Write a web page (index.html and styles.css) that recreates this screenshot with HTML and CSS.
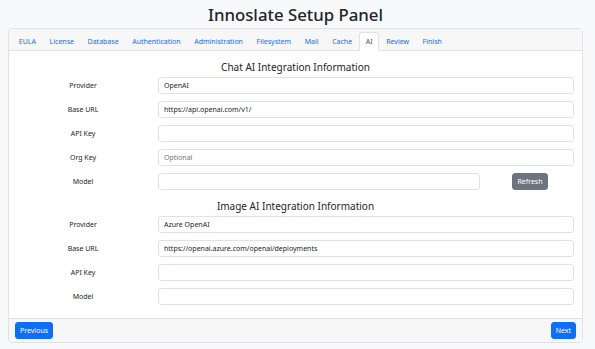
FILE: index.html
```html
<!DOCTYPE html>
<html lang="en">
<head>
    <meta charset="UTF-8">
    <meta name="viewport" content="width=device-width, initial-scale=1.0">
    <title>Innoslate Setup Panel</title>
    <link rel="stylesheet" href="styles.css">
</head>
<body>
    <h1>Innoslate Setup Panel</h1>
    <div class="card">
        <div class="card-header">
            <nav class="tabs">
                <a href="#eula">EULA</a>
                <a href="#license">License</a>
                <a href="#database">Database</a>
                <a href="#authentication">Authentication</a>
                <a href="#administration">Administration</a>
                <a href="#filesystem">Filesystem</a>
                <a href="#mail">Mail</a>
                <a href="#cache">Cache</a>
                <a href="#ai" class="active">AI</a>
                <a href="#review">Review</a>
                <a href="#finish">Finish</a>
            </nav>
        </div>
        <div class="card-body">
            <h2>Chat AI Integration Information</h2>
            <div class="row">
                <label for="chatProvider">Provider</label>
                <input type="text" id="chatProvider" value="OpenAI">
            </div>
            <div class="row">
                <label for="chatUrl">Base URL</label>
                <input type="text" id="chatUrl" value="https://api.openai.com/v1/">
            </div>
            <div class="row">
                <label for="chatKey">API Key</label>
                <input type="text" id="chatKey">
            </div>
            <div class="row">
                <label for="chatOrg">Org Key</label>
                <input type="text" id="chatOrg" placeholder="Optional">
            </div>
            <div class="row">
                <label for="chatModel">Model</label>
                <div class="model-field">
                    <input type="text" id="chatModel">
                    <div class="refresh-cell">
                        <button type="button" class="btn btn-secondary">Refresh</button>
                    </div>
                </div>
            </div>

            <h2>Image AI Integration Information</h2>
            <div class="row">
                <label for="imageProvider">Provider</label>
                <input type="text" id="imageProvider" value="Azure OpenAI">
            </div>
            <div class="row">
                <label for="imageUrl">Base URL</label>
                <input type="text" id="imageUrl" value="https://openai.azure.com/openai/deployments">
            </div>
            <div class="row">
                <label for="imageKey">API Key</label>
                <input type="text" id="imageKey">
            </div>
            <div class="row">
                <label for="imageModel">Model</label>
                <input type="text" id="imageModel">
            </div>
        </div>
        <div class="card-footer">
            <button type="button" class="btn btn-primary">Previous</button>
            <button type="button" class="btn btn-primary">Next</button>
        </div>
    </div>
</body>
</html>
```

FILE: styles.css
```css
body {
    font-family: "Noto Sans", "Open Sans", sans-serif;
    font-size: 7px;
    background-color: #f8f9fa;
    color: #212529;
    margin: 0;
    padding: 0 12px 0 8px;
}

h1 {
    font-size: 16.8px;
    font-weight: 500;
    text-align: center;
    line-height: 24px;
    margin: 3px 0 1px;
}

.card {
    background-color: #fff;
    border: 1px solid #dfe1e4;
    border-radius: 4px;
    overflow: hidden;
}

.card-header {
    background-color: #f7f7f7;
    border-bottom: 1px solid #dee2e6;
    padding: 3px 8px 0;
}

.tabs {
    display: flex;
    margin-bottom: -1px;
    margin-left: -5px;
}

    .tabs a {
        color: #0d6efd;
        text-decoration: none;
        padding: 3px 5.8px;
        line-height: 11px;
        border: 1px solid transparent;
        border-top-left-radius: 3px;
        border-top-right-radius: 3px;
    }

        .tabs a.active {
            color: #495057;
            background-color: #fff;
            border-color: #dee2e6 #dee2e6 #fff;
        }

.card-body {
    padding: 0 8px 6px;
}

h2 {
    font-size: 10px;
    font-weight: 400;
    text-align: center;
    line-height: 14px;
    margin: 9px 0 3px;
}

.row {
    display: grid;
    grid-template-columns: 132px 1fr;
    gap: 9px;
    align-items: center;
    margin-bottom: 7px;
}

    .row label {
        text-align: center;
    }

input {
    font-family: inherit;
    font-size: 7px;
    color: #212529;
    height: 17px;
    box-sizing: border-box;
    padding: 0 5px;
    border: 1px solid #dee2e6;
    border-radius: 3px;
    background-color: #fff;
    width: 100%;
    min-width: 0;
}

    input::placeholder {
        color: #6c757d;
    }

.model-field {
    display: grid;
    grid-template-columns: 1fr 88px;
    gap: 6px;
    align-items: center;
}

.refresh-cell {
    display: flex;
    justify-content: center;
}

.btn {
    font-family: inherit;
    font-size: 7px;
    color: #fff;
    height: 17px;
    padding: 0 4px;
    border: 1px solid transparent;
    border-radius: 3px;
    cursor: pointer;
}

.btn-secondary {
    background-color: #6c757d;
    border-color: #6c757d;
}

.btn-primary {
    background-color: #0d6efd;
    border-color: #0d6efd;
}

.card-footer {
    background-color: #f7f7f7;
    border-top: 1px solid #dee2e6;
    padding: 3px 6px;
    display: flex;
    justify-content: space-between;
}
```
